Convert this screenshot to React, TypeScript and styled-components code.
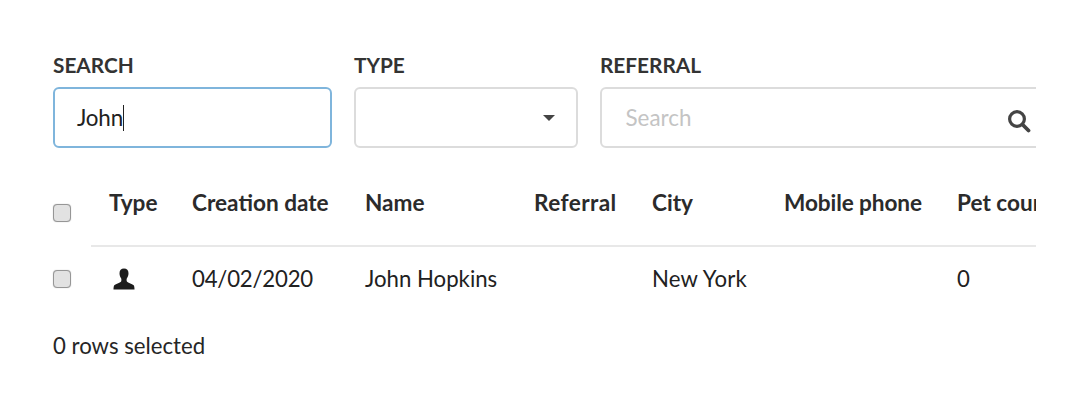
import React from "react";
import styled, { createGlobalStyle } from "styled-components";

const Global = createGlobalStyle`
  html, body { margin: 0; padding: 0; background: #fff; }
  body { font-family: "Lato", "Liberation Sans", sans-serif; color: #212121; }
`;

const Page = styled.div`
  width: 1036px;
  height: 416px;
  overflow: hidden;
  padding: 52px 0 0 53px;
  box-sizing: border-box;
`;

const Filters = styled.div`
  display: flex;
  gap: 22px;
`;

const Field = styled.div<{ $w: number }>`
  flex: 0 0 ${(p) => p.$w}px;
  width: ${(p) => p.$w}px;
  display: flex;
  flex-direction: column;
  gap: 9px;
`;

const Label = styled.div`
  font-size: 20.8px;
  line-height: 26px;
  font-weight: 700;
  color: #333;
`;

const Control = styled.div<{ $focus?: boolean }>`
  position: relative;
  height: 61px;
  box-sizing: border-box;
  border: 2px solid ${(p) => (p.$focus ? "#7fb5dc" : "#dcdcdc")};
  border-radius: 6px;
  background: #fff;
  display: flex;
  align-items: center;
  padding: 0 22px;
  font-size: 22.4px;
`;

const TypedText = styled.span`
  color: #212121;
  border-right: 1px solid #212121;
  line-height: 26px;
  margin-right: 1px;
  letter-spacing: -0.2px;
`;

const Placeholder = styled.span`
  color: #c4c4c4;
  margin-left: 1.5px;
`;

const Caret = styled.span`
  position: absolute;
  right: 21px;
  top: 26px;
  width: 0;
  height: 0;
  border-left: 6.5px solid transparent;
  border-right: 6.5px solid transparent;
  border-top: 6.5px solid #444;
`;

const SearchIcon = styled.svg`
  position: absolute;
  left: 405px;
  top: 20px;
  width: 24px;
  height: 24px;
`;

const Table = styled.div`
  margin-top: 26px;
  width: 983px;
`;

const Row = styled.div`
  display: flex;
`;

const CheckCell = styled.div<{ $top: number }>`
  flex: 0 0 38px;
  padding-top: ${(p) => p.$top}px;
`;

const Check = styled.div`
  width: 18px;
  height: 18px;
  box-sizing: border-box;
  border: 1.5px solid #969696;
  border-radius: 4px;
  background: #e2e2e2;
  box-shadow: 0 0 1px #aaa;
`;

const Cells = styled.div<{ $head?: boolean }>`
  flex: 1;
  display: grid;
  grid-template-columns: 83px 173px 169px 118px 132px 173px 200px;
  height: ${(p) => (p.$head ? 73 : 69)}px;
  border-bottom: ${(p) => (p.$head ? "2px solid #e8e8e8" : "0")};
  box-sizing: border-box;
  padding-top: ${(p) => (p.$head ? 16 : 19)}px;
`;

const HeadCell = styled.div<{ $track?: number }>`
  padding-left: 18px;
  font-size: 22.6px;
  line-height: 26px;
  font-weight: 700;
  color: #2b2b2b;
  white-space: nowrap;
  letter-spacing: ${(p) => p.$track ?? 0}px;
`;

const Cell = styled.div<{ $track?: number }>`
  padding-left: 18px;
  font-size: 22.2px;
  line-height: 26px;
  color: #212121;
  white-space: nowrap;
  letter-spacing: ${(p) => p.$track ?? 0}px;
`;

const UserIcon = styled.svg`
  display: block;
  width: 24px;
  height: 24px;
  margin: 1px 0 0 3px;
`;

const Footer = styled.div`
  margin-top: 17px;
  font-size: 22.2px;
  line-height: 26px;
  color: #262626;
`;

export default function App() {
  return (
    <>
      <Global />
      <Page>
        <Filters>
          <Field $w={279}>
            <Label>SEARCH</Label>
            <Control $focus><TypedText>John</TypedText></Control>
          </Field>
          <Field $w={224}>
            <Label>TYPE</Label>
            <Control><Caret /></Control>
          </Field>
          <Field $w={480}>
            <Label>REFERRAL</Label>
            <Control>
              <Placeholder>Search</Placeholder>
              <SearchIcon viewBox="0 0 24 24">
                <circle cx="10" cy="10" r="7.4" fill="none" stroke="#444" strokeWidth="3.2" />
                <path d="M15.5 15.5L21.5 21.500" stroke="#444" strokeWidth="3.8" strokeLinecap="round" />
              </SearchIcon>
            </Control>
          </Field>
        </Filters>
        <Table>
          <Row>
            <CheckCell $top={30}><Check /></CheckCell>
            <Cells $head>
              <HeadCell>Type</HeadCell>
              <HeadCell>Creation date</HeadCell>
              <HeadCell>Name</HeadCell>
              <HeadCell $track={0.4}>Referral</HeadCell>
              <HeadCell>City</HeadCell>
              <HeadCell $track={-0.1}>Mobile phone</HeadCell>
              <HeadCell>Pet count</HeadCell>
            </Cells>
          </Row>
          <Row>
            <CheckCell $top={23}><Check /></CheckCell>
            <Cells>
              <Cell>
                <UserIcon viewBox="0 0 24 24">
                  <path fill="#1c1c1c" d="M12 1.500c-2.900 0-4.500 2-4.500 4.800 0 2 .7 3.800 1.600 5 .4.700.4 2.500 0 3.200-.9 1.500-6 2.600-7 4-.4.600-.6 2.600-.6 4h21c0-1.400-.2-3.400-.6-4-1-1.400-6.100-2.500-7-4-.4-.7-.4-2.500 0-3.200.9-1.200 1.600-3 1.600-5 0-2.800-1.600-4.800-4.500-4.800z" />
                </UserIcon>
              </Cell>
              <Cell $track={-0.2}>04/02/2020</Cell>
              <Cell>John Hopkins</Cell>
              <Cell />
              <Cell $track={0.2}>New York</Cell>
              <Cell />
              <Cell>0</Cell>
            </Cells>
          </Row>
          <Footer>0 rows selected</Footer>
        </Table>
      </Page>
    </>
  );
}
